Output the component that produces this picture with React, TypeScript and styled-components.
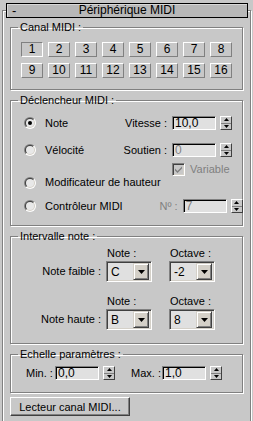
import React, { useId } from 'react';
import styled, { createGlobalStyle } from 'styled-components';

const GlobalStyle = createGlobalStyle`
  html, body {
    margin: 0;
    padding: 0;
    background: #c8c8c8;
  }
  body {
    font-family: "Liberation Sans", Arial, sans-serif;
    font-size: 11px;
    color: #000;
  }
`;

function Radio({ checked }: { checked?: boolean }) {
  const id = useId();
  return (
    <svg width="12" height="12" viewBox="0 0 12 12">
      <defs>
        <linearGradient id={id + 'o'} x1="0" y1="0" x2="1" y2="1">
          <stop offset="0.5" stopColor="#808080" />
          <stop offset="0.5" stopColor="#ffffff" />
        </linearGradient>
        <linearGradient id={id + 'i'} x1="0" y1="0" x2="1" y2="1">
          <stop offset="0.5" stopColor="#404040" />
          <stop offset="0.5" stopColor="#d4d0c8" />
        </linearGradient>
      </defs>
      <circle cx="6" cy="6" r="6" fill={`url(#${id}o)`} />
      <circle cx="6" cy="6" r="5" fill={`url(#${id}i)`} />
      <circle cx="6" cy="6" r="4" fill="#e8e8e8" />
      {checked && <circle cx="6" cy="6" r="2" fill="#000" />}
    </svg>
  );
}

function Tri({ up }: { up?: boolean }) {
  return (
    <svg width="5" height="3" viewBox="0 0 5 3">
      <polygon points={up ? '0,3 5,3 2.5,0' : '0,0 5,0 2.5,3'} fill="#000" />
    </svg>
  );
}

function Spinner({ value, disabled }: { value: string; disabled?: boolean }) {
  return (
    <>
      <Field $disabled={disabled}>{value}</Field>
      <SpinArrows>
        <SpinHalf $top>
          <Tri up />
        </SpinHalf>
        <SpinHalf>
          <Tri />
        </SpinHalf>
      </SpinArrows>
    </>
  );
}

function Dropdown({ value }: { value: string }) {
  return (
    <Select>
      <SelectValue>{value}</SelectValue>
      <SelectButton>
        <svg width="7" height="4" viewBox="0 0 7 4">
          <polygon points="0,0 7,0 3.5,4" fill="#000" />
        </svg>
      </SelectButton>
    </Select>
  );
}

const channels = Array.from({ length: 16 }, (_, i) => i + 1);

function App() {
  return (
    <Page>
      <GlobalStyle />
      <Rollout>
        <Header>
          <Minus>-</Minus>
          <HeaderTitle>Périphérique MIDI</HeaderTitle>
          <Minus />
        </Header>
        <Stack>
          <Group>
            <GroupTitle>Canal MIDI :</GroupTitle>
            <ChannelGrid>
              {channels.map((n) => (
                <ChannelButton key={n} $pressed={n === 1}>
                  {n}
                </ChannelButton>
              ))}
            </ChannelGrid>
          </Group>

          <Group>
            <GroupTitle>Déclencheur MIDI :</GroupTitle>
            <TriggerBody>
              <TriggerRow $h={14} $mt={0}>
                <Choice>
                  <Radio checked />
                  <span>Note</span>
                </Choice>
                <Param>
                  <Label $w={60} $right>Vitesse :</Label>
                  <Spinner value="10,0" />
                </Param>
              </TriggerRow>
              <TriggerRow $h={14} $mt={13}>
                <Choice>
                  <Radio />
                  <span>Vélocité</span>
                </Choice>
                <Param>
                  <Label $w={60} $right>Soutien :</Label>
                  <Spinner value="0" disabled />
                </Param>
              </TriggerRow>
              <TriggerRow $h={13} $mt={6}>
                <span />
                <CheckWrap>
                  <CheckBox>
                    <svg width="9" height="9" viewBox="0 0 9 9">
                      <path d="M1 3.5 L3.5 6 L8 1.5 L8 3.5 L3.5 8 L1 5.5 Z" fill="#808080" />
                    </svg>
                  </CheckBox>
                  <Label $muted>Variable</Label>
                </CheckWrap>
              </TriggerRow>
              <TriggerRow $h={13} $mt={0}>
                <Choice>
                  <Radio />
                  <span>Modificateur de hauteur</span>
                </Choice>
              </TriggerRow>
              <TriggerRow $h={14} $mt={10}>
                <Choice>
                  <Radio />
                  <span>Contrôleur MIDI</span>
                </Choice>
                <Param>
                  <Label $w={60} $right $muted>Nº :</Label>
                  <Spinner value="7" disabled />
                </Param>
              </TriggerRow>
            </TriggerBody>
          </Group>

          <Group>
            <GroupTitle>Intervalle note :</GroupTitle>
            <RangeBody>
              <RangeBlock>
                <span />
                <ColHead>Note :</ColHead>
                <ColHead>Octave :</ColHead>
                <RowLabel>Note faible :</RowLabel>
                <Dropdown value="C" />
                <Dropdown value="-2" />
              </RangeBlock>
              <RangeBlock>
                <span />
                <ColHead>Note :</ColHead>
                <ColHead>Octave :</ColHead>
                <RowLabel>Note haute :</RowLabel>
                <Dropdown value="B" />
                <Dropdown value="8" />
              </RangeBlock>
            </RangeBody>
          </Group>

          <Group>
            <GroupTitle>Echelle paramètres :</GroupTitle>
            <ScaleRow>
              <Label $w={29}>Min. :</Label>
              <Spinner value="0,0" />
              <Label $w={31} $ml={16}>Max. :</Label>
              <Spinner value="1,0" />
            </ScaleRow>
          </Group>

          <WideButton>Lecteur canal MIDI...</WideButton>
        </Stack>
      </Rollout>
    </Page>
  );
}

const Page = styled.div`
  width: 253px;
  height: 421px;
  overflow: hidden;
  padding-top: 3px;
  box-sizing: border-box;
`;

const Rollout = styled.fieldset`
  margin: 0 0 0 2px;
  width: 249px;
  min-width: 0;
  min-height: 450px;
  box-sizing: border-box;
  padding: 3px 7px 0 7px;
  border: 1px solid #808080;
  box-shadow: inset 1px 1px 0 #fff, 1px 1px 0 #fff;
`;

const Header = styled.legend`
  box-sizing: border-box;
  width: 242px;
  height: 15px;
  margin-left: -4px;
  padding: 0 5px;
  border: 1px solid #000;
  background: #b8b8b8;
  box-shadow: inset 1px 1px 0 #d8d8d8;
  display: flex;
  align-items: center;
  font-size: 12px;
  line-height: 13px;
`;

const Minus = styled.span`
  width: 10px;
  font-size: 13px;
`;

const HeaderTitle = styled.span`
  flex: 1;
  text-align: center;
`;

const Stack = styled.div`
  display: flex;
  flex-direction: column;
  gap: 4px;
`;

const Group = styled.fieldset`
  margin: 0;
  padding: 0;
  min-width: 0;
  border: 1px solid #808080;
  box-shadow: inset 1px 1px 0 #fff, 1px 1px 0 #fff;
`;

const GroupTitle = styled.legend`
  margin-left: 7px;
  padding: 0 2px;
  height: 13px;
  line-height: 13px;
  font-size: 11px;
`;

const ChannelGrid = styled.div`
  display: grid;
  grid-template-columns: repeat(8, 22px);
  column-gap: 5px;
  row-gap: 6px;
  padding: 8px 0 11px 10px;
`;

const ChannelButton = styled.button<{ $pressed?: boolean }>`
  width: 22px;
  height: 15px;
  margin: 0;
  padding: 0;
  box-sizing: border-box;
  background: #c8c8c8;
  border: 1px solid;
  border-color: ${(p) => (p.$pressed ? '#808080 #fff #fff #808080' : '#fff #808080 #808080 #fff')};
  font-family: "Liberation Sans", Arial, sans-serif;
  font-size: 12px;
  line-height: 13px;
  color: #000;
`;

const TriggerBody = styled.div`
  display: flex;
  flex-direction: column;
  padding: 9px 10px 12px 13px;
`;

const TriggerRow = styled.div<{ $h: number; $mt: number }>`
  display: flex;
  align-items: center;
  justify-content: space-between;
  height: ${(p) => p.$h}px;
  margin-top: ${(p) => p.$mt}px;
`;

const Choice = styled.div`
  display: flex;
  align-items: center;
  gap: 9px;
  font-size: 11px;
  line-height: 13px;
  white-space: nowrap;
`;

const Param = styled.div`
  display: flex;
  align-items: center;
`;

const Label = styled.span<{ $w?: number; $right?: boolean; $muted?: boolean; $ml?: number }>`
  display: inline-block;
  box-sizing: border-box;
  width: ${(p) => (p.$w ? `${p.$w}px` : 'auto')};
  margin-left: ${(p) => p.$ml || 0}px;
  padding-right: ${(p) => (p.$right ? 5 : 0)}px;
  text-align: ${(p) => (p.$right ? 'right' : 'left')};
  color: ${(p) => (p.$muted ? '#808080' : '#000')};
  font-size: 11px;
  line-height: 13px;
  white-space: nowrap;
`;

const Field = styled.div<{ $disabled?: boolean }>`
  width: 44px;
  height: 14px;
  box-sizing: border-box;
  border: 1px solid;
  border-color: #808080 #fff #fff #808080;
  box-shadow: inset 1px 1px 0 #000;
  background: #e0e0e0;
  padding-left: 2px;
  font-size: 12px;
  line-height: 13px;
  color: ${(p) => (p.$disabled ? '#808080' : '#000')};
`;

const SpinArrows = styled.div`
  display: flex;
  flex-direction: column;
  width: 12px;
  height: 14px;
  margin-left: 4px;
  box-sizing: border-box;
  border: 1px solid;
  border-color: #fff #404040 #404040 #fff;
  background: #c8c8c8;
`;

const SpinHalf = styled.div<{ $top?: boolean }>`
  flex: 1;
  display: flex;
  align-items: center;
  justify-content: center;
  border-bottom: ${(p) => (p.$top ? '1px solid #808080' : '0')};
`;

const CheckWrap = styled.div`
  display: flex;
  align-items: center;
  gap: 5px;
  width: 60px;
`;

const CheckBox = styled.span`
  width: 13px;
  height: 13px;
  box-sizing: border-box;
  display: flex;
  align-items: center;
  justify-content: center;
  border: 1px solid;
  border-color: #808080 #fff #fff #808080;
  box-shadow: inset 1px 1px 0 #404040, inset -1px -1px 0 #d4d0c8;
  background: #c8c8c8;
`;

const RangeBody = styled.div`
  display: flex;
  flex-direction: column;
  gap: 13px;
  padding: 4px 0 13px 0;
`;

const RangeBlock = styled.div`
  display: grid;
  grid-template-columns: 95px 63px 46px;
  grid-template-rows: 12px 21px;
  row-gap: 2px;
`;

const ColHead = styled.span`
  padding-left: 1px;
  font-size: 11px;
  line-height: 12px;
`;

const RowLabel = styled.span`
  align-self: center;
  text-align: right;
  padding-right: 5px;
  font-size: 11px;
  line-height: 13px;
`;

const Select = styled.div`
  width: 46px;
  height: 21px;
  box-sizing: border-box;
  display: flex;
  align-items: center;
  padding: 2px 2px 2px 4px;
  border: 1px solid;
  border-color: #808080 #fff #fff #808080;
  box-shadow: inset 1px 1px 0 #404040, inset -1px -1px 0 #d4d0c8;
  background: #e0e0e0;
  font-size: 12px;
`;

const SelectValue = styled.span`
  flex: 1;
`;

const SelectButton = styled.span`
  width: 16px;
  height: 17px;
  box-sizing: border-box;
  display: flex;
  align-items: center;
  justify-content: center;
  border: 1px solid;
  border-color: #d4d0c8 #404040 #404040 #d4d0c8;
  box-shadow: inset 1px 1px 0 #fff, inset -1px -1px 0 #808080;
  background: #d4d0c8;
`;

const ScaleRow = styled.div`
  display: flex;
  align-items: center;
  padding: 5px 0 12px 15px;
`;

const WideButton = styled.button`
  align-self: flex-start;
  width: 120px;
  height: 19px;
  margin: 0;
  padding: 0;
  box-sizing: border-box;
  background: #c8c8c8;
  border: 1px solid;
  border-color: #fff #404040 #404040 #fff;
  box-shadow: inset -1px -1px 0 #808080;
  font-family: "Liberation Sans", Arial, sans-serif;
  font-size: 11px;
  color: #000;
`;

export default App;
